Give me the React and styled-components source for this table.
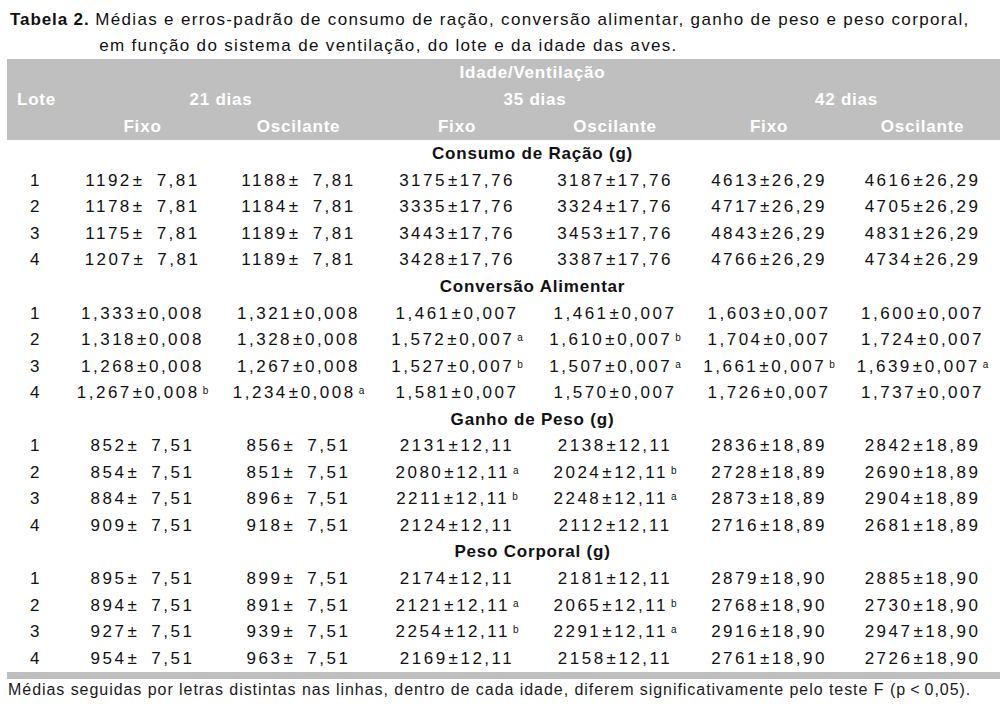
import React from 'react';
import styled, { createGlobalStyle } from 'styled-components';

const GlobalStyle = createGlobalStyle`
  body {
    margin: 0;
    background: #ffffff;
    font-family: "Liberation Sans", Arial, sans-serif;
    color: #111111;
  }
`;

const Page = styled.div`
  width: 1006px;
  height: 716px;
  padding: 7px 6px 0 7px;
  box-sizing: border-box;
`;

const Caption = styled.div`
  display: flex;
  font-size: 17px;
  line-height: 26px;
  letter-spacing: 1.33px;
  padding-left: 3px;
`;

const CaptionLabel = styled.span`
  font-weight: bold;
  letter-spacing: 0.9px;
  white-space: pre;
`;

const CaptionText = styled.span`
  white-space: nowrap;
`;

const Indent = styled.span`
  display: inline-block;
  width: 4px;
`;

const COLS = '58px 155px 157px 160px 156px 152px 155px';

const Head = styled.div`
  display: grid;
  grid-template-columns: ${COLS};
  grid-auto-rows: 27px;
  background: #bfbfbf;
  color: #ffffff;
  font-weight: bold;
  font-size: 17px;
  letter-spacing: 0.8px;
`;

const HeadCell = styled.div`
  grid-column: span ${(p) => p.$span || 1};
  display: flex;
  align-items: center;
  justify-content: ${(p) => (p.$left ? 'flex-start' : 'center')};
  padding-left: ${(p) => (p.$left ? '10px' : '0')};
`;

const Body = styled.div`
  display: grid;
  grid-template-columns: ${COLS};
  grid-auto-rows: 26.55px;
  margin-top: 1px;
  font-size: 17px;
  letter-spacing: 2.5px;
`;

const Section = styled.div`
  grid-column: 2 / span 6;
  display: flex;
  align-items: center;
  justify-content: center;
  font-weight: bold;
  letter-spacing: 0.8px;
`;

const Cell = styled.div`
  display: flex;
  align-items: center;
  justify-content: center;
  white-space: pre;
`;

const Pm = styled.span`
  margin: 0 0 0 1px;
`;

const Sup = styled.sup`
  font-size: 10px;
  letter-spacing: 0;
  margin-left: 3px;
  position: relative;
  top: -2px;
  vertical-align: top;
  line-height: 1;
`;

const BottomRule = styled.div`
  height: 7px;
  background: #bfbfbf;
`;

const Note = styled.p`
  margin: 0;
  padding-left: 1px;
  font-size: 16px;
  line-height: 22px;
  letter-spacing: 0.95px;
  color: #1a1a1a;
`;

const sections = [
  {
    title: 'Consumo de Ração (g)',
    err: ['\u20077,81', '\u20077,81', '17,76', '17,76', '26,29', '26,29'],
    rows: [
      ['1192', '1188', '3175', '3187', '4613', '4616'],
      ['1178', '1184', '3335', '3324', '4717', '4705'],
      ['1175', '1189', '3443', '3453', '4843', '4831'],
      ['1207', '1189', '3428', '3387', '4766', '4734'],
    ],
  },
  {
    title: 'Conversão Alimentar',
    err: ['0,008', '0,008', '0,007', '0,007', '0,007', '0,007'],
    rows: [
      ['1,333', '1,321', '1,461', '1,461', '1,603', '1,600'],
      ['1,318', '1,328', '1,572 a', '1,610 b', '1,704', '1,724'],
      ['1,268', '1,267', '1,527 b', '1,507 a', '1,661 b', '1,639 a'],
      ['1,267 b', '1,234 a', '1,581', '1,570', '1,726', '1,737'],
    ],
  },
  {
    title: 'Ganho de Peso (g)',
    err: ['\u20077,51', '\u20077,51', '12,11', '12,11', '18,89', '18,89'],
    rows: [
      ['852', '856', '2131', '2138', '2836', '2842'],
      ['854', '851', '2080 a', '2024 b', '2728', '2690'],
      ['884', '896', '2211 b', '2248 a', '2873', '2904'],
      ['909', '918', '2124', '2112', '2716', '2681'],
    ],
  },
  {
    title: 'Peso Corporal (g)',
    err: ['\u20077,51', '\u20077,51', '12,11', '12,11', '18,90', '18,90'],
    rows: [
      ['895', '899', '2174', '2181', '2879', '2885'],
      ['894', '891', '2121 a', '2065 b', '2768', '2730'],
      ['927', '939', '2254 b', '2291 a', '2916', '2947'],
      ['954', '963', '2169', '2158', '2761', '2726'],
    ],
  },
];

function Value({ raw, err }) {
  const [num, letter] = raw.split(' ');
  return (
    <Cell>
      {num}
      <Pm>±</Pm>
      {err}
      {letter && <Sup>{letter}</Sup>}
    </Cell>
  );
}

export default function App() {
  return (
    <Page>
      <GlobalStyle />
      <Caption>
        <CaptionLabel>Tabela 2. </CaptionLabel>
        <CaptionText>
          Médias e erros-padrão de consumo de ração, conversão alimentar, ganho de peso e peso corporal,
          <br />
          <Indent />em função do sistema de ventilação, do lote e da idade das aves.
        </CaptionText>
      </Caption>

      <Head>
        <HeadCell />
        <HeadCell $span={6}>Idade/Ventilação</HeadCell>
        <HeadCell $left>Lote</HeadCell>
        <HeadCell $span={2}>21 dias</HeadCell>
        <HeadCell $span={2}>35 dias</HeadCell>
        <HeadCell $span={2}>42 dias</HeadCell>
        <HeadCell />
        {['Fixo', 'Oscilante', 'Fixo', 'Oscilante', 'Fixo', 'Oscilante'].map((h, i) => (
          <HeadCell key={i}>{h}</HeadCell>
        ))}
      </Head>

      <Body>
        {sections.map((s) => (
          <React.Fragment key={s.title}>
            <Cell />
            <Section>{s.title}</Section>
            {s.rows.map((row, r) => (
              <React.Fragment key={r}>
                <Cell>{r + 1}</Cell>
                {row.map((v, c) => (
                  <Value key={c} raw={v} err={s.err[c]} />
                ))}
              </React.Fragment>
            ))}
          </React.Fragment>
        ))}
      </Body>
      <BottomRule />
      <Note>
        Médias seguidas por letras distintas nas linhas, dentro de cada idade, diferem significativamente pelo teste F (p&thinsp;&lt;&thinsp;0,05).
      </Note>
    </Page>
  );
}
